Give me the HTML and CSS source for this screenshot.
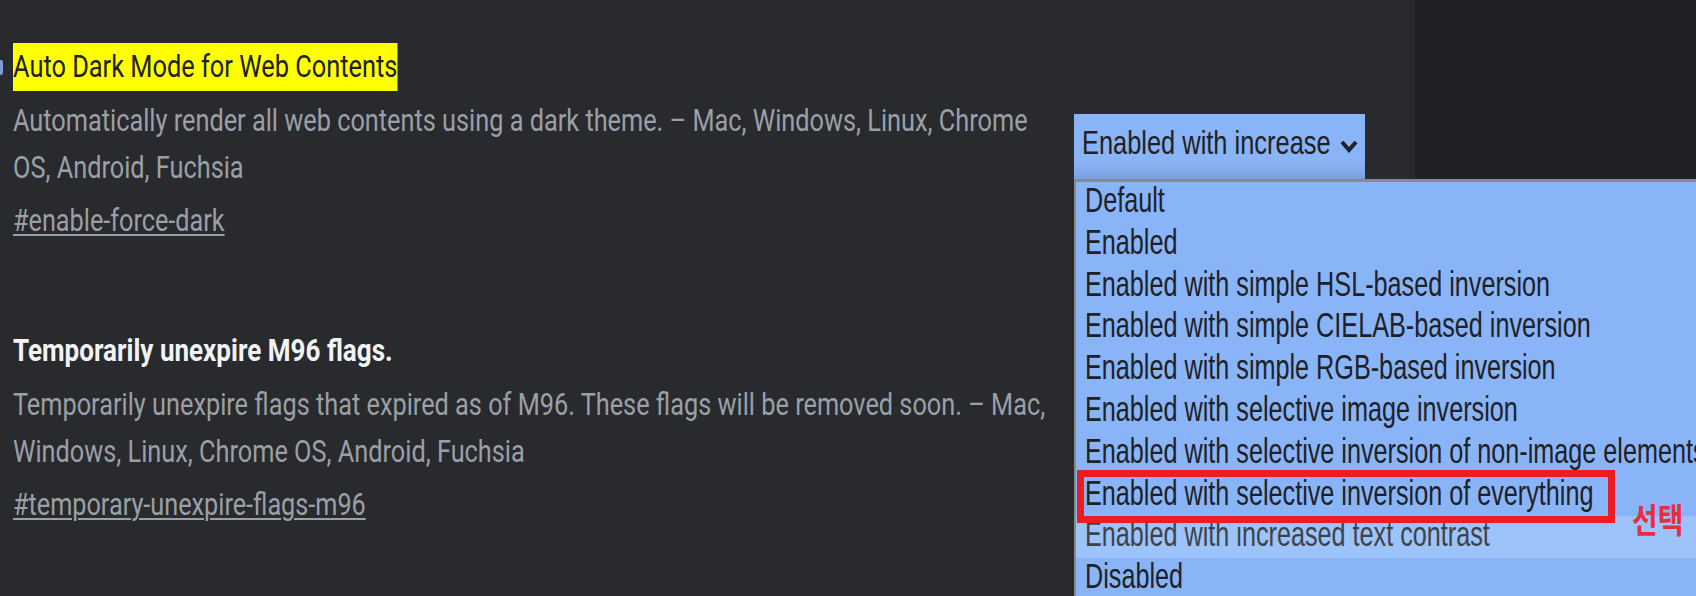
FILE: index.html
```html
<!DOCTYPE html>
<html lang="en">
<head>
<meta charset="utf-8">
<title>Experiments</title>
<link rel="stylesheet" href="styles.css">
</head>
<body>
<div class="page">
  <main class="flags">
    <section class="flag">
      <div class="flag-text">
        <div class="flag-title-row">
          <span class="edge-mark"></span>
          <h2 class="flag-title hl">Auto Dark Mode for Web Contents</h2>
        </div>
        <p class="flag-desc">Automatically render all web contents using a dark theme. – Mac, Windows, Linux, Chrome<br>OS, Android, Fuchsia</p>
        <a class="flag-link" href="#enable-force-dark">#enable-force-dark</a>
      </div>
      <div class="select">
        <span class="select-clip"><span class="select-text">Enabled with increased text contrast</span></span>
        <svg class="chev" viewBox="0 0 18 14" aria-hidden="true"><polyline points="2,3 9,11 16,3" fill="none" stroke="#202124" stroke-width="4"/></svg>
      </div>
    </section>
    <section class="flag">
      <div class="flag-text">
        <div class="flag-title-row">
          <h2 class="flag-title strong">Temporarily unexpire M96 flags.</h2>
        </div>
        <p class="flag-desc">Temporarily unexpire flags that expired as of M96. These flags will be removed soon. – Mac,<br>Windows, Linux, Chrome OS, Android, Fuchsia</p>
        <a class="flag-link" href="#temporary-unexpire-flags-m96">#temporary-unexpire-flags-m96</a>
      </div>
    </section>
  </main>
  <aside class="side"></aside>

  <div class="dropdown" role="listbox">
    <div class="option"><span>Default</span></div>
    <div class="option"><span>Enabled</span></div>
    <div class="option"><span>Enabled with simple HSL-based inversion</span></div>
    <div class="option"><span>Enabled with simple CIELAB-based inversion</span></div>
    <div class="option"><span>Enabled with simple RGB-based inversion</span></div>
    <div class="option"><span>Enabled with selective image inversion</span></div>
    <div class="option"><span>Enabled with selective inversion of non-image elements</span></div>
    <div class="option"><span>Enabled with selective inversion of everything</span></div>
    <div class="option current"><span>Enabled with increased text contrast</span></div>
    <div class="option"><span>Disabled</span></div>
    <div class="mark-box"></div>
    <span class="mark-label">선택</span>
  </div>
</div>
</body>
</html>
```
FILE: styles.css
```css
html, body {
  margin: 0;
  padding: 0;
  background: #202124;
  font-family: Roboto, "Liberation Sans", sans-serif;
}

.page {
  position: relative;
  display: flex;
  width: 1696px;
  height: 596px;
  overflow: hidden;
}

.flags {
  flex: none;
  width: 1415px;
  box-sizing: border-box;
  padding: 43px 0 0 13px;
  background: #292a2e;
}

.side {
  flex: 1;
  background: #202124;
}

.flag {
  display: flex;
  align-items: flex-start;
}

.flag + .flag {
  margin-top: 82px;
}

.flag-text {
  flex: none;
  width: 1061px;
}

.flag-title-row {
  display: flex;
  align-items: center;
  height: 48px;
}

.edge-mark {
  flex: none;
  width: 3px;
  height: 15px;
  margin: 0 10px 0 -13px;
  background: #7d9bd0;
  border-radius: 0 2px 2px 0;
}

.flag-title {
  margin: 0;
  font-size: 31px;
  line-height: 48px;
  font-weight: 400;
  white-space: nowrap;
  transform: scaleX(0.818);
  transform-origin: left center;
}

.flag-title.hl {
  background: #ffff00;
  color: #202124;
}

.flag-title.strong {
  font-weight: 700;
  color: #f1f3f4;
  transform: scaleX(0.84);
}

.flag-desc {
  margin: 6px 0 0;
  font-size: 31px;
  line-height: 47px;
  color: #9aa0a6;
  white-space: nowrap;
  transform: scaleX(0.816);
  transform-origin: left top;
}

.flag-link {
  display: block;
  margin-top: 6px;
  font-size: 31px;
  line-height: 48px;
  color: #9aa0a6;
  text-decoration: underline;
  text-decoration-thickness: 2px;
  text-underline-offset: 3px;
  white-space: nowrap;
  transform: scaleX(0.814);
  transform-origin: left top;
}

.select {
  flex: none;
  display: flex;
  align-items: flex-start;
  box-sizing: border-box;
  width: 291px;
  height: 65px;
  margin-top: 71px;
  padding: 9px 0 0 8px;
  background: linear-gradient(to bottom, #8ab4f8 0%, #8ab4f8 72%, #7c9fdc 100%);
}

.select-clip {
  flex: none;
  width: 249px;
  overflow: hidden;
  white-space: nowrap;
  font-family: "Liberation Sans", Arial, sans-serif;
  font-size: 33px;
  line-height: 40px;
  color: #202124;
}

.select-text {
  display: inline-block;
  transform: scaleX(0.77);
  transform-origin: left top;
}

.chev {
  flex: none;
  width: 18px;
  height: 14px;
  margin: 16px 0 0 9px;
}

.dropdown {
  position: absolute;
  left: 1074px;
  top: 179px;
  right: 0;
  bottom: 0;
  background: #8ab4f8;
  border-top: 3px solid #8a8a8a;
  border-left: 2px solid #8a8a8a;
}

.option {
  height: 41.8px;
  padding-left: 9px;
  font-family: "Liberation Sans", Arial, sans-serif;
  font-size: 35px;
  line-height: 36px;
  color: #202124;
  white-space: nowrap;
}

.option span {
  display: inline-block;
  transform: scaleX(0.72);
  transform-origin: left top;
}

.option.current {
  background: #9dc3fb;
  color: #3f4248;
}

.mark-box {
  position: absolute;
  left: 1px;
  top: 288px;
  width: 538px;
  height: 53px;
  box-sizing: border-box;
  border: 7px solid #ed1c24;
}

.mark-label {
  position: absolute;
  left: 556px;
  top: 320px;
  font-family: "Noto Sans CJK KR", sans-serif;
  font-weight: 700;
  font-size: 34px;
  line-height: 34px;
  color: #e92c40;
  white-space: nowrap;
  transform: scaleX(0.82);
  transform-origin: left top;
}
```
